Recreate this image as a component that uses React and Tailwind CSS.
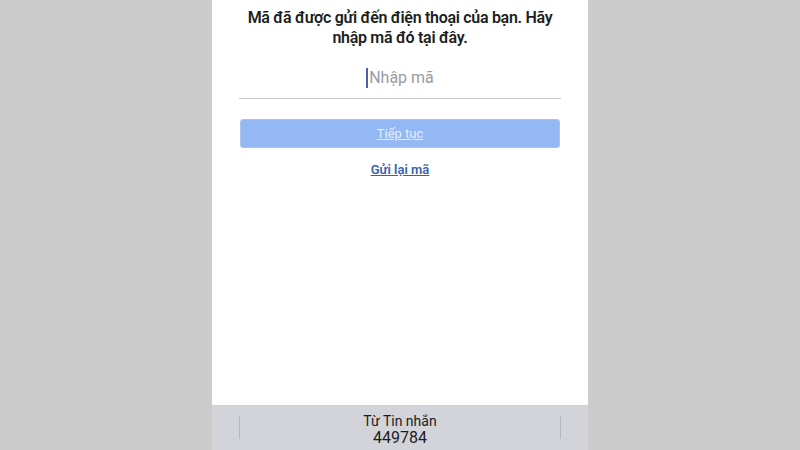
import React from "react";

const App = () => {
  return (
    <div className="flex h-[450px] w-[800px] justify-center bg-[#cccccc] font-['Roboto','Liberation_Sans',Arial,sans-serif]">
      <div className="flex w-[376px] flex-col bg-white">
        <div className="flex flex-1 flex-col items-center">
          <h1 className="mt-[8px] px-[26px] text-center text-[16px] font-semibold leading-[20px] tracking-[-0.3px] text-[#1c1e21]">
            Mã đã được gửi đến điện thoại của bạn. Hãy nhập mã đó tại đây.
          </h1>
          <div className="mt-[19px] flex w-[322px] items-center justify-center border-b border-[#c8c8cc] pb-[9px]">
            <span className="mr-[1px] h-[20px] w-[2px] bg-[#4c5fb8]" />
            <span className="text-[16px] leading-[22px] text-[#9a9aa2]">Nhập mã</span>
          </div>
          <button className="mt-[20px] h-[29px] w-[320px] rounded-[3px] border border-[#a9c2f0] bg-[#94b8f4] text-[13px] text-[#e6eefc] underline">
            Tiếp tục
          </button>
          <a href="#" className="mt-[12px] text-[13px] font-semibold leading-[20px] text-[#3b5fae] underline">
            Gửi lại mã
          </a>
        </div>
        <div className="flex h-[45px] items-center bg-[#d3d4d9]">
          <div className="ml-[27px] h-[23px] w-px bg-[#b7b8bd]" />
          <div className="flex flex-1 flex-col items-center pt-[4px] text-[#1c1c1e]">
            <span className="text-[14px] leading-[16px]">Từ Tin nhắn</span>
            <span className="text-[16px] leading-[17px]">449784</span>
          </div>
          <div className="mr-[27px] h-[23px] w-px bg-[#b7b8bd]" />
        </div>
      </div>
    </div>
  );
};

export default App;
